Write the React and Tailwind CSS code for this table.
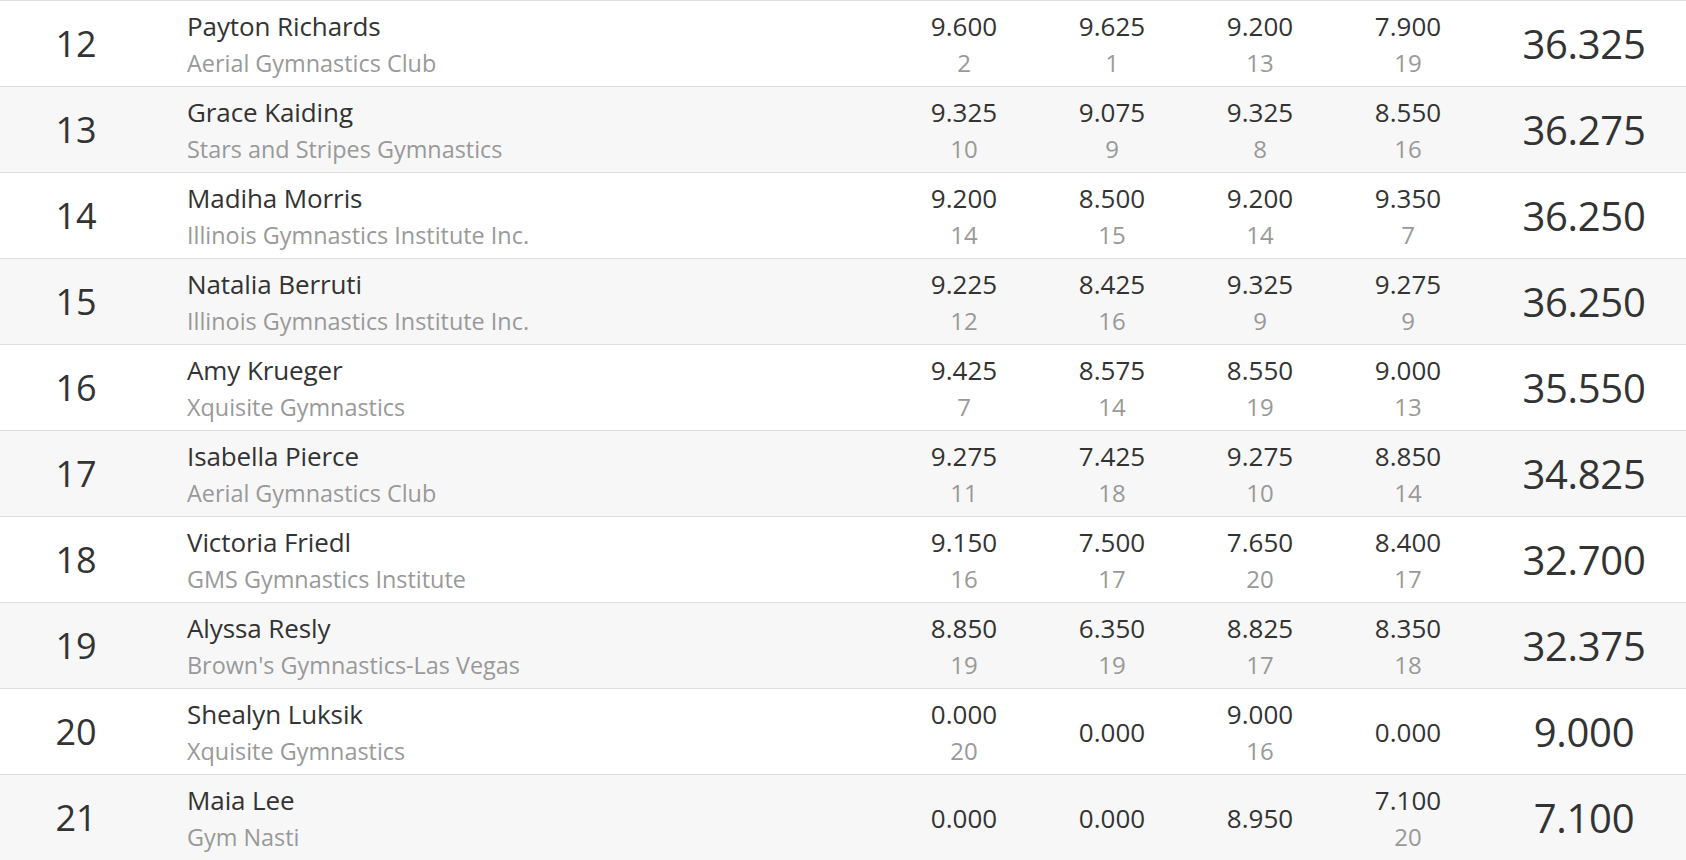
import React from "react";

const rows = [
  { rank: 12, name: "Payton Richards", team: "Aerial Gymnastics Club", ev: [["9.600", 2], ["9.625", 1], ["9.200", 13], ["7.900", 19]], total: "36.325" },
  { rank: 13, name: "Grace Kaiding", team: "Stars and Stripes Gymnastics", ev: [["9.325", 10], ["9.075", 9], ["9.325", 8], ["8.550", 16]], total: "36.275" },
  { rank: 14, name: "Madiha Morris", team: "Illinois Gymnastics Institute Inc.", ev: [["9.200", 14], ["8.500", 15], ["9.200", 14], ["9.350", 7]], total: "36.250" },
  { rank: 15, name: "Natalia Berruti", team: "Illinois Gymnastics Institute Inc.", ev: [["9.225", 12], ["8.425", 16], ["9.325", 9], ["9.275", 9]], total: "36.250" },
  { rank: 16, name: "Amy Krueger", team: "Xquisite Gymnastics", ev: [["9.425", 7], ["8.575", 14], ["8.550", 19], ["9.000", 13]], total: "35.550" },
  { rank: 17, name: "Isabella Pierce", team: "Aerial Gymnastics Club", ev: [["9.275", 11], ["7.425", 18], ["9.275", 10], ["8.850", 14]], total: "34.825" },
  { rank: 18, name: "Victoria Friedl", team: "GMS Gymnastics Institute", ev: [["9.150", 16], ["7.500", 17], ["7.650", 20], ["8.400", 17]], total: "32.700" },
  { rank: 19, name: "Alyssa Resly", team: "Brown's Gymnastics-Las Vegas", ev: [["8.850", 19], ["6.350", 19], ["8.825", 17], ["8.350", 18]], total: "32.375" },
  { rank: 20, name: "Shealyn Luksik", team: "Xquisite Gymnastics", ev: [["0.000", 20], ["0.000", null], ["9.000", 16], ["0.000", null]], total: "9.000" },
  { rank: 21, name: "Maia Lee", team: "Gym Nasti", ev: [["0.000", null], ["0.000", null], ["8.950", null], ["7.100", 20]], total: "7.100" },
];

export default function App() {
  return (
    <div
      className="w-[1686px] h-[860px] overflow-hidden bg-white text-[#333333]"
      style={{ fontFamily: '"Open Sans", "Liberation Sans", sans-serif' }}
    >
      {rows.map((r, i) => (
        <div
          key={r.rank}
          className={
            "grid grid-cols-[152px_738px_148px_148px_148px_148px_204px] h-[86px] border-t border-[#dddddd] items-center " +
            (i % 2 === 1 ? "bg-[#f7f7f7]" : "bg-white")
          }
        >
          <div className="text-center text-[36px] leading-[40px]">{r.rank}</div>
          <div className="pl-[35px] flex flex-col">
            <div className="text-[26px] leading-[38px] tracking-[-0.1px]">{r.name}</div>
            <div className="text-[23.4px] leading-[36px] text-[#999999]">{r.team}</div>
          </div>
          {r.ev.map(([s, rk], j) => (
            <div key={j} className="flex flex-col items-center">
              <div className="text-[26px] leading-[38px]">{s}</div>
              {rk !== null && (
                <div className="text-[24px] leading-[36px] text-[#999999]">{rk}</div>
              )}
            </div>
          ))}
          <div className="text-center text-[40px] leading-[44px] tracking-[-0.3px]">{r.total}</div>
        </div>
      ))}
    </div>
  );
}
